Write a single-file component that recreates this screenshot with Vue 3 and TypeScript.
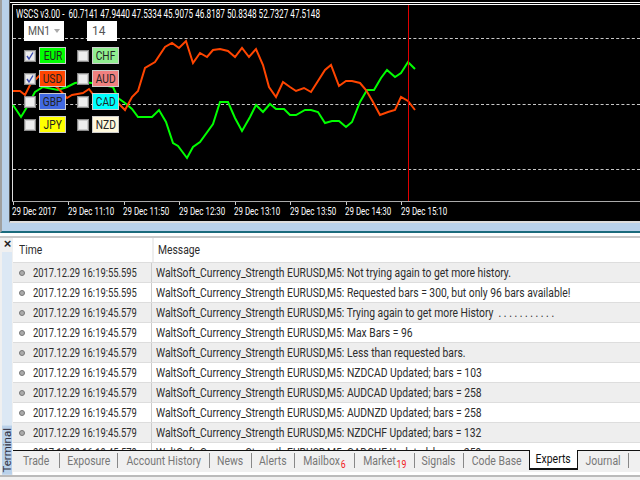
<script setup lang="ts">
interface Currency { name: string; cls: string; checked: boolean }
const currencies: Currency[] = [
  { name: 'EUR', cls: 'eur', checked: true },
  { name: 'CHF', cls: 'chf', checked: false },
  { name: 'USD', cls: 'usd', checked: true },
  { name: 'AUD', cls: 'aud', checked: false },
  { name: 'GBP', cls: 'gbp', checked: false },
  { name: 'CAD', cls: 'cad', checked: false },
  { name: 'JPY', cls: 'jpy', checked: false },
  { name: 'NZD', cls: 'nzd', checked: false },
]
const green = '13,105 21,117 27,107 35,92 43,87 58,90 67,87 75,83 82,82 92,83 113,87 118,98 125,103 132,109 138,117 152,117 159,110 166,122 173,143 178,146 187,158 193,147 200,142 213,124 220,102 228,102 235,118 242,131 250,117 256,105 263,112 270,104 276,109 284,109 290,115 296,115 305,110 311,110 318,112 325,123 332,121 339,121 346,127 352,122 360,102 367,90 374,90 381,78 387,70 395,77 401,73 408,62 415,69'
const orange = '13,91 20,91 25,95 30,85 40,75 58,88 67,98 72,95 83,93 89,89 95,97 110,102 118,103 125,110 132,97 138,91 145,68 155,62 165,47 172,43 179,48 186,41 193,63 200,53 207,57 213,50 220,49 228,51 235,57 242,48 249,57 256,49 263,65 269,87 276,97 283,82 290,87 296,91 304,88 311,92 325,70 331,65 339,86 346,81 352,81 360,83 366,90 373,102 380,115 388,112 395,110 401,97 408,101 415,110'
const axis = ['29 Dec 2017', '29 Dec 11:10', '29 Dec 11:50', '29 Dec 12:30', '29 Dec 13:10', '29 Dec 13:50', '29 Dec 14:30', '29 Dec 15:10']
const ticks = [13, 68, 124, 179, 235, 290, 346, 401]
const p = 'WaltSoft_Currency_Strength EURUSD,M5: '
const rows = [
  ['2017.12.29 16:19:55.595', p + 'Not trying again to get more history.'],
  ['2017.12.29 16:19:55.595', p + 'Requested bars = 300, but only 96 bars available!'],
  ['2017.12.29 16:19:45.579', p + 'Trying again to get more History  . . . . . . . . . . .'],
  ['2017.12.29 16:19:45.579', p + 'Max Bars = 96'],
  ['2017.12.29 16:19:45.579', p + 'Less than requested bars.'],
  ['2017.12.29 16:19:45.579', p + 'NZDCAD Updated; bars = 103'],
  ['2017.12.29 16:19:45.579', p + 'AUDCAD Updated; bars = 258'],
  ['2017.12.29 16:19:45.579', p + 'AUDNZD Updated; bars = 258'],
  ['2017.12.29 16:19:45.579', p + 'NZDCHF Updated; bars = 132'],
  ['2017.12.29 16:19:45.579', p + 'CADCHF Updated; bars = 259'],
]
const tabs = [
  { t: 'Trade' }, { t: 'Exposure' }, { t: 'Account History' }, { t: 'News' }, { t: 'Alerts' },
  { t: 'Mailbox', n: '6' }, { t: 'Market', n: '19' }, { t: 'Signals' }, { t: 'Code Base' },
  { t: 'Experts', active: true }, { t: 'Journal' },
]
</script>

<template>
  <div class="app">
    <section class="mdi">
      <div class="chart">
        <svg class="plot" viewBox="10 0 630 223" width="630" height="223">
          <line x1="10" x2="640" y1="2.5" y2="2.5" stroke="#fff" />
          <line x1="12" x2="640" y1="4.5" y2="4.5" stroke="#fff" />
          <line x1="12.5" x2="12.5" y1="4" y2="202" stroke="#ddd" />
          <line x1="12" x2="640" y1="201.5" y2="201.5" stroke="#aaa" />
          <line v-for="t in ticks" :key="t" :x1="t + 0.5" :x2="t + 0.5" y1="202" y2="205" stroke="#ccc" />
          <g stroke="#c8c8c8" stroke-dasharray="3 2.2">
            <line x1="13" x2="640" y1="38.5" y2="38.5" />
            <line x1="13" x2="640" y1="104.5" y2="104.5" />
            <line x1="13" x2="640" y1="169.5" y2="169.5" />
          </g>
          <polyline :points="green" fill="none" stroke="#00ff00" stroke-width="2" />
          <polyline :points="orange" fill="none" stroke="#ff4500" stroke-width="2" />
          <line x1="408.5" x2="408.5" y1="5" y2="201" stroke="#e00000" />
        </svg>
        <div class="readout"><span class="sq">WSCS v3.00 - &nbsp;60.7141 47.9440 47.5334 45.9075 46.8187 50.8348 52.7327 47.5148</span></div>
        <div class="panel">
          <div class="inputs">
            <div class="combo"><span class="sq">MN1</span><i class="arrow"></i></div>
            <div class="field">14</div>
          </div>
          <div class="grid">
            <div v-for="c in currencies" :key="c.name" class="cell">
              <span class="check">
                <svg v-if="c.checked" viewBox="0 0 10 10" width="10" height="10">
                  <path d="M2 5 L4 8 L8 1.5" fill="none" stroke="#3a4bb0" stroke-width="1.4" />
                </svg>
              </span>
              <span class="cur" :class="c.cls"><span class="sq">{{ c.name }}</span></span>
            </div>
          </div>
        </div>
        <div class="axis">
          <span v-for="a in axis" :key="a"><span class="sq">{{ a }}</span></span>
        </div>
      </div>
    </section>
    <div class="divider"></div>
    <section class="terminal">
      <aside class="side">
        <span class="close">×</span>
        <div class="strip"><span>Terminal</span></div>
      </aside>
      <div class="main">
        <div class="table">
          <div class="head">
            <span class="time"><span class="sq">Time</span></span>
            <span class="msg"><span class="sq">Message</span></span>
          </div>
          <div v-for="(r, i) in rows" :key="i" class="row">
            <span class="time"><i class="dot"></i><span class="sq">{{ r[0] }}</span></span>
            <span class="msg"><span class="sq">{{ r[1] }}</span></span>
          </div>
        </div>
        <nav class="tabs">
          <div v-for="t in tabs" :key="t.t" class="tab" :class="{ active: t.active }">
            <span class="sq">{{ t.t }}<sub v-if="t.n">{{ t.n }}</sub></span>
          </div>
        </nav>
      </div>
    </section>
    <div class="foot"></div>
  </div>
</template>

<style scoped>
.app {
  width: 640px;
  height: 480px;
  overflow: hidden;
  display: flex;
  flex-direction: column;
  background: #f0f0f0;
  font-family: Roboto, "Liberation Sans", sans-serif;
  font-size: 12px;
  color: #2c2c2c;
}
.sq {
  display: inline-block;
  flex: none;
  white-space: pre;
  transform-origin: left center;
  transform: scaleX(0.86);
}
.mdi {
  box-sizing: border-box;
  height: 233px;
  flex: none;
  background: #b9d1ea;
  border-left: 2px solid #a0a0a0;
  border-bottom: 2px solid #1b6b7c;
  padding: 0 0 8px 7px;
}
.chart {
  position: relative;
  box-sizing: border-box;
  height: 223px;
  background: #000;
  border-left: 1px solid #555;
  border-bottom: 2px solid #ddd;
  overflow: hidden;
}
.plot {
  position: absolute;
  left: 0;
  top: 0;
  display: block;
}
.readout {
  position: absolute;
  left: 6px;
  top: 7px;
  color: #fff;
  white-space: nowrap;
  line-height: 14px;
  font-size: 12px;
}
.readout .sq {
  transform: scaleX(0.68);
}
.panel {
  position: absolute;
  left: 14px;
  top: 21px;
  width: 110px;
}
.inputs {
  display: flex;
  gap: 23px;
}
.combo,
.field {
  box-sizing: border-box;
  height: 20px;
  background: #fff;
  color: #555;
  display: flex;
  align-items: center;
}
.combo {
  width: 40px;
  padding: 0 4px;
  justify-content: space-between;
}
.field {
  width: 30px;
  padding-left: 5px;
}
.arrow {
  width: 0;
  height: 0;
  border-left: 3.5px solid transparent;
  border-right: 3.5px solid transparent;
  border-top: 4px solid #aaa;
}
.grid {
  margin-top: 6px;
  display: grid;
  grid-template-columns: 53px 53px;
  row-gap: 6px;
}
.cell {
  display: flex;
  align-items: center;
  gap: 3px;
  height: 17px;
}
.check {
  box-sizing: border-box;
  flex: none;
  width: 12px;
  height: 12px;
  background: #eee;
  border: 1px solid #8a8a8a;
  box-shadow: inset 0 0 0 1px #ccc;
  display: flex;
  align-items: center;
  justify-content: center;
}
.cur {
  box-sizing: border-box;
  width: 27px;
  height: 17px;
  border: 1px solid #ccc;
  color: #222;
  display: flex;
  align-items: center;
  justify-content: center;
}
.cur .sq {
  transform-origin: center;
  transform: scaleX(0.85);
}
.eur { background: #00ff00; }
.chf { background: #90ee90; }
.usd { background: #ff4500; }
.aud { background: #f08080; }
.gbp { background: #4169e1; }
.cad { background: #00ffff; }
.jpy { background: #ffff00; }
.nzd { background: #fff8dc; }
.axis {
  position: absolute;
  left: 2px;
  top: 204px;
  display: flex;
  color: #fff;
  font-size: 11.5px;
  line-height: 14px;
  white-space: nowrap;
}
.axis > span {
  width: 55.5px;
}
.axis .sq {
  transform: scaleX(0.69);
}
.divider {
  flex: none;
  box-sizing: border-box;
  height: 5px;
  background: #fff;
  border-bottom: 2px solid #c8c8c8;
}
.terminal {
  flex: 1;
  min-height: 0;
  display: flex;
}
.side {
  flex: none;
  width: 13px;
  display: flex;
  flex-direction: column;
}
.close {
  height: 14px;
  font: bold 13px/12px "Liberation Sans", sans-serif;
  color: #222;
  text-align: center;
  padding-left: 2px;
}
.strip {
  flex: 1;
  margin: 0 1px 0 2px;
  background: #dce8f4;
  display: flex;
  align-items: flex-end;
  justify-content: center;
}
.strip span {
  writing-mode: vertical-rl;
  transform: rotate(180deg);
  background: #b9d1ea;
  width: 10px;
  line-height: 10px;
  font-size: 11.5px;
  color: #334;
  padding: 2px 0;
}
.main {
  flex: 1;
  min-width: 0;
  display: flex;
  flex-direction: column;
  background: #fff;
}
.table {
  flex: 1;
  min-height: 0;
  overflow: hidden;
}
.head {
  display: flex;
  height: 24px;
  align-items: center;
  background: #fff;
}
.head .msg {
  padding-left: 4px;
  border-left: 2px solid #eee;
  line-height: 24px;
}
.row {
  display: flex;
  box-sizing: border-box;
  height: 20px;
  align-items: center;
  border-top: 1px solid #ddd;
}
.row:nth-child(even) {
  background: #eee;
}
.time {
  box-sizing: border-box;
  flex: none;
  width: 139px;
  padding-left: 6px;
  display: flex;
  align-items: center;
}
.row .time {
  height: 19px;
  border-right: 1px solid #ccc;
}
.row .time .sq {
  transform: scaleX(0.78);
}
.dot {
  box-sizing: border-box;
  flex: none;
  width: 6px;
  height: 6px;
  margin-right: 8px;
  border-radius: 50%;
  background: #aaa;
  border: 1px solid #777;
}
.msg {
  padding-left: 4px;
}
.tabs {
  flex: none;
  box-sizing: border-box;
  height: 25px;
  display: grid;
  grid-template-columns: 47px 58px 92px 42px 43px 60px 60px 49px 65px 49px 51px;
  align-items: start;
  background: #f0f0f0;
  border-top: 1px solid #111;
  box-shadow: inset 0 -3px 0 #fff;
  color: #777;
}
.tab {
  box-sizing: border-box;
  height: 15px;
  margin-top: 2px;
  border-right: 1px solid #888;
  display: flex;
  align-items: center;
  justify-content: center;
  white-space: nowrap;
}
.tab .sq {
  transform-origin: center;
  transform: scaleX(0.87);
}
.tab sub {
  color: #f01818;
  font-size: 10px;
  line-height: 0;
  margin-left: 1px;
}
.tab:has(+ .active) {
  border-right: 0;
}
.tab.active {
  margin-top: -1px;
  height: 20px;
  background: #fff;
  color: #111;
  border: 1px solid #111;
  border-top: 0;
  border-bottom-width: 2px;
}
.foot {
  flex: none;
  box-sizing: border-box;
  height: 5px;
  border-top: 2px solid #bbb;
  background: #f0f0f0;
}
</style>
